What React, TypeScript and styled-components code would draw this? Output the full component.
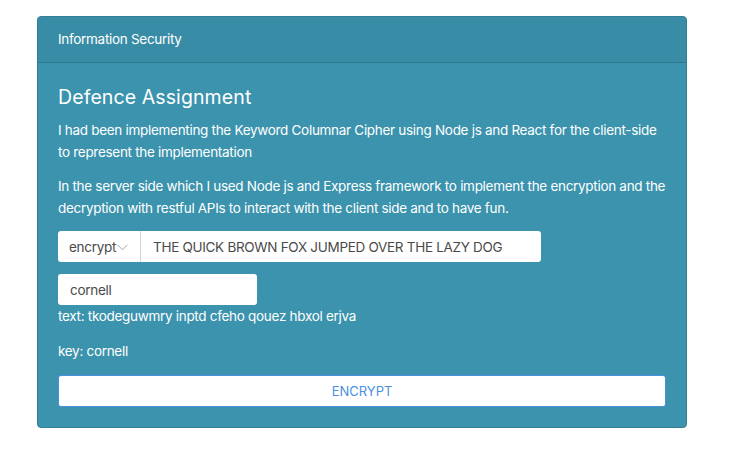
import styled, {createGlobalStyle} from "styled-components";

const GlobalStyle = createGlobalStyle`
  body {
    margin: 0;
    background: #ffffff;
    font-family: Inter, "Liberation Sans", Arial, sans-serif;
  }
`

const Page = styled.div`
  padding: 16px 0 0 37px;
`

const Card = styled.div`
  width: 650px;
  box-sizing: border-box;
  background-color: #3b93ad;
  border: 1px solid #357f96;
  border-radius: 4px;
  color: #ffffff;
  overflow: hidden;
`

const CardHeader = styled.div`
  background-color: #398ca6;
  border-bottom: 1px solid #2f7990;
  padding: 12px 20px;
  font-size: 13.5px;
  line-height: 21px;
  letter-spacing: -0.3px;
`

const CardBody = styled.div`
  padding: 20px 20px 20px;
`

const Title = styled.h5`
  margin: 0 0 8px;
  font-size: 19.5px;
  font-weight: 400;
  letter-spacing: 0.1px;
  line-height: 28px;
`

const Text = styled.p`
  margin: 0 0 12px;
  font-size: 13.5px;
  line-height: 22px;
  letter-spacing: -0.3px;
`

const InputGroup = styled.div`
  display: flex;
  width: 483px;
  height: 31px;
  background: #ffffff;
  border-radius: 3px;
  color: #4a4a4a;
  font-size: 13.5px;
  letter-spacing: -0.3px;
`

const Select = styled.div`
  display: flex;
  align-items: center;
  width: 83px;
  box-sizing: border-box;
  padding-left: 11px;
  border-right: 1px solid #d6d6d6;
`

const Chevron = styled.svg`
  margin-left: 1px;
  margin-top: 1px;
`

const Field = styled.div<{ $width?: number }>`
  display: flex;
  align-items: center;
  box-sizing: border-box;
  padding-left: 12px;
  ${p => p.$width ? `width: ${p.$width}px;` : "flex: 1;"}
`

const KeyInput = styled(Field)`
  height: 31px;
  margin-top: 12px;
  background: #ffffff;
  border-radius: 3px;
  color: #4a4a4a;
  font-size: 13.5px;
  letter-spacing: -0.3px;
`

const Output = styled.div<{ $gap?: number }>`
  font-size: 13.5px;
  line-height: 20px;
  letter-spacing: -0.3px;
  margin-top: ${p => p.$gap ?? 0}px;
`

const Button = styled.button`
  display: block;
  width: 100%;
  height: 32px;
  margin-top: 14px;
  background: #ffffff;
  border: 1px solid #4a90e2;
  border-radius: 3px;
  color: #4a90e2;
  font-family: Inter, "Liberation Sans", Arial, sans-serif;
  font-size: 13px;
`

export default function App() {
    return (
        <>
            <GlobalStyle/>
            <Page>
                <Card>
                    <CardHeader>Information Security</CardHeader>
                    <CardBody>
                        <Title>Defence Assignment</Title>
                        <Text>
                            I had been implementing the Keyword Columnar Cipher using Node js and React for the client-side to represent the implementation
                        </Text>
                        <Text>
                            In the server side which I used Node js and Express framework to implement the encryption and the decryption with restful APIs to interact with the client side and to have fun.
                        </Text>
                        <InputGroup>
                            <Select>
                                encrypt
                                <Chevron width="11" height="7" viewBox="0 0 11 7">
                                    <path d="M0.5 0.8 L5.5 5.8 L10.5 0.8" fill="none" stroke="#a8a8a8" strokeWidth="1"/>
                                </Chevron>
                            </Select>
                            <Field>THE QUICK BROWN FOX JUMPED OVER THE LAZY DOG</Field>
                        </InputGroup>
                        <KeyInput $width={199}>cornell</KeyInput>
                        <Output $gap={1}>text: tkodeguwmry inptd cfeho qouez hbxol erjva</Output>
                        <Output $gap={15}>key: cornell</Output>
                        <Button>ENCRYPT</Button>
                    </CardBody>
                </Card>
            </Page>
        </>
    )
}
